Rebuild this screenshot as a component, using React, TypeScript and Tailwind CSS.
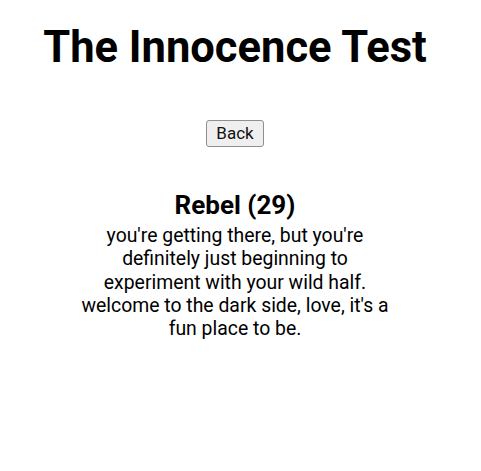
export default function App() {
  return (
    <div
      className="flex min-h-[471px] w-[470px] flex-col items-center bg-white text-black"
      style={{ fontFamily: "Roboto, 'Liberation Sans', sans-serif" }}
    >
      <h1 className="mt-[26px] text-[43.5px] font-bold leading-[44px]">The Innocence Test</h1>
      <button className="mt-[50px] rounded-[3px] border border-[#8f8f8f] bg-[#efefef] px-[9px] py-[2px] text-[17px] leading-[21px] text-[#111]">
        Back
      </button>
      <h2 className="mt-[43px] text-[26px] font-bold leading-[30px]">Rebel (29)</h2>
      <p className="mt-[4px] w-[322px] text-center text-[19.4px] leading-[23.3px]">
        you're getting there, but you're definitely just beginning to experiment with your wild half.
        welcome to the dark side, love, it's a fun place to be.
      </p>
    </div>
  );
}
